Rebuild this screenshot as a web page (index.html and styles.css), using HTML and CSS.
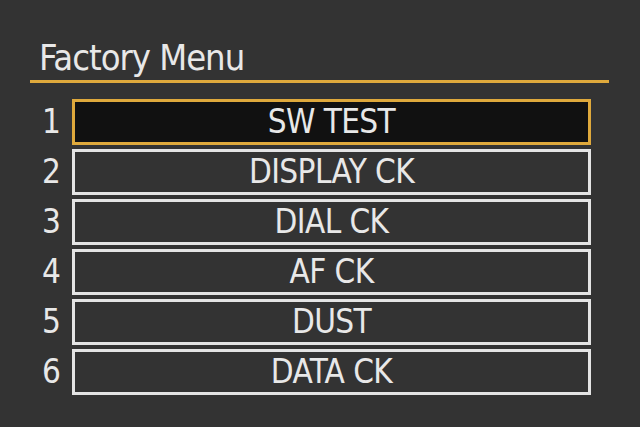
FILE: index.html
```html
<!DOCTYPE html>
<html>
<head>
<meta charset="utf-8">
<link rel="stylesheet" href="styles.css">
</head>
<body>
<div class="screen">
  <div class="header">
    <div class="title">Factory Menu</div>
  </div>
  <div class="list">
    <div class="row"><div class="num">1</div><div class="item selected">SW TEST</div></div>
    <div class="row"><div class="num">2</div><div class="item">DISPLAY CK</div></div>
    <div class="row"><div class="num">3</div><div class="item">DIAL CK</div></div>
    <div class="row"><div class="num">4</div><div class="item">AF CK</div></div>
    <div class="row"><div class="num">5</div><div class="item">DUST</div></div>
    <div class="row"><div class="num">6</div><div class="item">DATA CK</div></div>
  </div>
</div>
</body>
</html>
```
FILE: styles.css
```css
html, body {
  margin: 0;
  padding: 0;
  background: #333333;
}
.screen {
  width: 640px;
  height: 427px;
  background: #333333;
  font-family: "DejaVu Sans Condensed", "DejaVu Sans", sans-serif;
  color: #e8e8e8;
  overflow: hidden;
}
.header {
  margin: 0 31px 0 30px;
  padding: 38px 0 0 9px;
  border-bottom: 3px solid #dfa93c;
  height: 42px;
  box-sizing: content-box;
}
.title {
  font-size: 36px;
  line-height: 40px;
  letter-spacing: -1px;
}
.list {
  display: flex;
  flex-direction: column;
  gap: 4px;
  padding: 16px 0 0 30px;
}
.row {
  display: flex;
  align-items: stretch;
  height: 46px;
}
.num {
  width: 42px;
  padding-left: 12px;
  box-sizing: border-box;
  font-size: 33px;
  line-height: 46px;
}
.item {
  width: 519px;
  box-sizing: border-box;
  border: 3px solid #e4e4e4;
  text-align: center;
  font-size: 33px;
  line-height: 40px;
  letter-spacing: -0.6px;
}
.item.selected {
  border-color: #dfa93c;
  background: #111111;
}
```
